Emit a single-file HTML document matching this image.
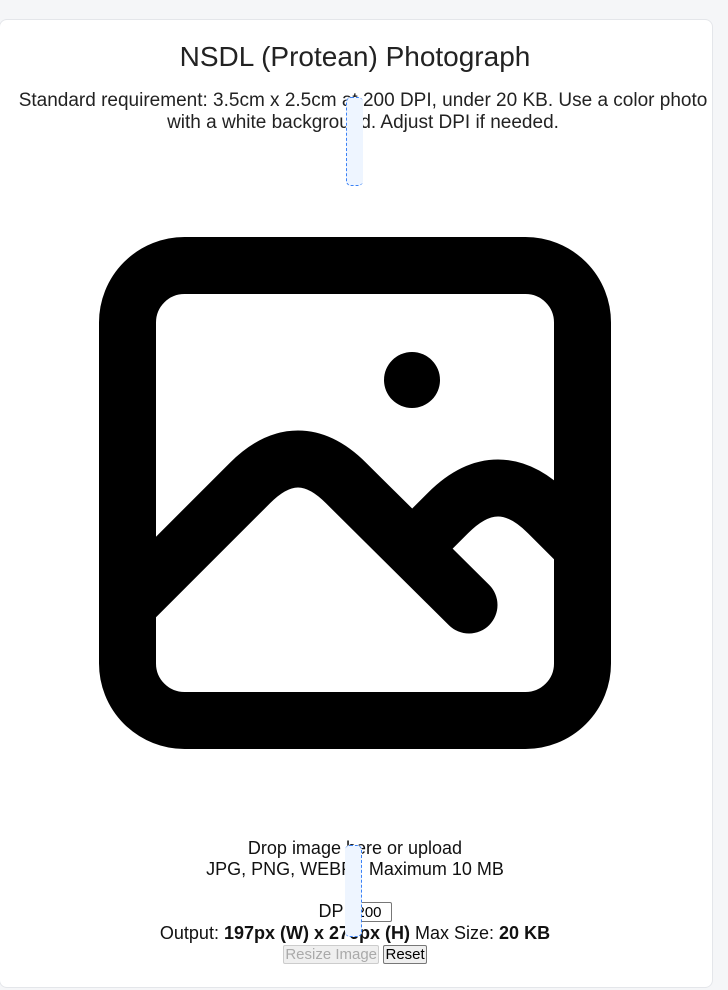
<!DOCTYPE html>
<html><head><meta charset="utf-8"><style>
body{margin:0;background:#f5f6f8;width:728px;height:990px;overflow:hidden;font-family:"Liberation Sans",sans-serif;color:#111}
.card{position:absolute;left:-1px;top:19px;width:712px;height:967px;background:#fff;border:1px solid #e4e6ea;border-radius:8px}
.t{position:absolute;left:0;width:710px;text-align:center;white-space:nowrap}
h1{margin:0;font-weight:400;font-size:28px;color:#222}
.dash{position:absolute;background:#eef5ff;border:1px dashed #3b82f6;border-radius:5px}
input{font:15px "Liberation Sans",sans-serif;width:32px;height:16px;padding:1px 2px;border:1px solid #777;border-radius:2px;vertical-align:middle}
button{font:15px "Liberation Sans",sans-serif;padding:0 1px;border:1px solid #777;border-radius:2px;background:#efefef}
</style></head><body>
<div class="card"></div>
<div class="t" style="top:41px"><h1>NSDL (Protean) Photograph</h1></div>
<div class="t" style="top:90px;font-size:19px;line-height:22px;color:#222;left:8px">Standard requirement: 3.5cm x 2.5cm at 200 DPI, under 20 KB. Use a color photo<br>with a white background. Adjust DPI if needed.</div>
<div class="dash" style="left:346px;top:97px;width:16px;height:87px;border-right:none"></div>
<svg style="position:absolute;left:0;top:0" width="728" height="990" viewBox="0 0 728 990" fill="none" stroke="#000" stroke-width="57" stroke-linecap="round" stroke-linejoin="round">
<rect x="127.5" y="265.5" width="455" height="455" rx="57"/>
<circle cx="412" cy="380" r="28" fill="#000" stroke="none"/>
<path d="M127.5 605.5 L250 483 Q298 435 346 483 L469 605"/>
<path stroke-linecap="butt" d="M420 541 L448 513 Q498 463 548 513 L582 547"/>
</svg>
<div class="t" style="top:838px;font-size:18px;line-height:21px">Drop image here or upload<br>JPG, PNG, WEBP · Maximum 10 MB</div>
<div class="t" style="top:901px;font-size:18px">DPI <input value="200"></div>
<div class="t" style="top:923px;font-size:18px">Output: <b>197px (W) x 276px (H)</b> Max Size: <b>20 KB</b></div>
<div class="t" style="top:945px"><button disabled style="color:#aaa;border-color:#ccc">Resize Image</button> <button>Reset</button></div>
<div class="dash" style="left:345px;top:845px;width:16px;height:90px;border-left:none"></div>
</body></html>
